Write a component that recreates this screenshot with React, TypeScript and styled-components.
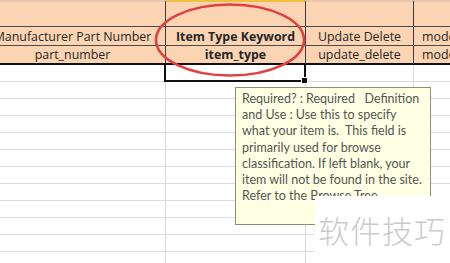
import React from "react";
import styled, { createGlobalStyle, css } from "styled-components";

const Global = createGlobalStyle`
  html, body { margin: 0; padding: 0; background: #ffffff; }
  body { width: 450px; height: 263px; overflow: hidden; position: relative; }
  #root { width: 450px; height: 263px; position: relative; overflow: hidden; }
`;

const Sheet = styled.div`
  display: grid;
  grid-template-columns: 186px 140px 108px 100px;
  grid-template-rows: 27px 19px 19px;
  grid-auto-rows: 17px;
  margin-left: -20px;
  font-family: "Open Sans", "Liberation Sans", sans-serif;
  font-size: 12.4px;
  color: #262626;
`;

const HeadCell = styled.div<{ $bold?: boolean; $gold?: boolean; $last?: boolean; $top?: boolean; $align?: string }>`
  background: #fbd4b3;
  border-right: 1px solid #3e3e3e;
  border-bottom: 1px solid ${(p) => (p.$last ? "#111" : "#4a4a4a")};
  ${(p) => p.$last && css`border-bottom-width: 2px;`}
  ${(p) => p.$top && css`border-top: 2px solid ${p.$gold ? "#f0c040" : "#e8c9b0"};`}
  display: flex;
  align-items: center;
  justify-content: ${(p) => p.$align || "center"};
  padding-left: ${(p) => (p.$align ? "8px" : "0")};
  font-weight: ${(p) => (p.$bold ? 700 : 400)};
  white-space: nowrap;
  overflow: hidden;
  box-sizing: border-box;
`;

const Cell = styled.div<{ $selected?: boolean }>`
  border-right: 1px solid #d9d9d9;
  border-bottom: 1px solid #dcdcdc;
  box-sizing: border-box;
  position: relative;
  ${(p) =>
    p.$selected &&
    css`
      &::after {
        content: "";
        position: absolute;
        left: -2px;
        top: -2px;
        right: -1px;
        bottom: -1px;
        border: 2px solid #111;
        z-index: 2;
      }
      &::before {
        content: "";
        position: absolute;
        right: -3px;
        bottom: -3px;
        width: 5px;
        height: 5px;
        background: #111;
        border: 1px solid #fff;
        z-index: 3;
      }
    `}
`;

const Ellipse = styled.svg`
  position: absolute;
  left: 150px;
  top: 0;
  width: 160px;
  height: 82px;
  z-index: 4;
  pointer-events: none;
`;

const Tip = styled.div`
  position: absolute;
  left: 235px;
  top: 87px;
  width: 196px;
  height: 138px;
  box-sizing: border-box;
  background: #ffffe3;
  border: 1px solid #8e8e74;
  padding: 3px 0 0 6px;
  font-family: "Lato", "Liberation Sans", sans-serif;
  font-size: 12.5px;
  line-height: 16.2px;
  color: #555555;
  white-space: pre;
  z-index: 5;
`;

const Watermark = styled.div`
  position: absolute;
  left: 315px;
  top: 196px;
  width: 135px;
  height: 67px;
  background: #ffffff;
  z-index: 6;
  display: flex;
  align-items: center;
  padding-left: 3px;
  box-sizing: border-box;
  font-family: "Noto Sans CJK SC", sans-serif;
  font-size: 31px;
  font-weight: 300;
  color: #cbcbcb;
  letter-spacing: 1px;
`;

const bodyRows = 12;

export default function App() {
  const tipText =
    "Required? : Required   Definition\n" +
    "and Use : Use this to specify\n" +
    "what your item is.  This field is\n" +
    "primarily used for browse\n" +
    "classification. If left blank, your\n" +
    "item will not be found in the site.\n" +
    "Refer to the Browse Tree";
  return (
    <>
      <Global />
      <Sheet>
        <HeadCell $top />
        <HeadCell $top $gold />
        <HeadCell $top />
        <HeadCell $top />

        <HeadCell>Manufacturer Part Number</HeadCell>
        <HeadCell $bold>Item Type Keyword</HeadCell>
        <HeadCell>Update Delete</HeadCell>
        <HeadCell $align="flex-start">model_number</HeadCell>

        <HeadCell $last>part_number</HeadCell>
        <HeadCell $last $bold>item_type</HeadCell>
        <HeadCell $last>update_delete</HeadCell>
        <HeadCell $last $align="flex-start">model</HeadCell>

        {Array.from({ length: bodyRows }).map((_, r) =>
          [0, 1, 2, 3].map((c) => <Cell key={`${r}-${c}`} $selected={r === 0 && c === 1} />)
        )}
      </Sheet>
      <Ellipse viewBox="0 0 160 82">
        <ellipse cx="80" cy="40" rx="74" ry="35.5" fill="none" stroke="#e0403f" strokeWidth="2.6" />
      </Ellipse>
      <Tip>{tipText}</Tip>
      <Watermark>软件技巧</Watermark>
    </>
  );
}
